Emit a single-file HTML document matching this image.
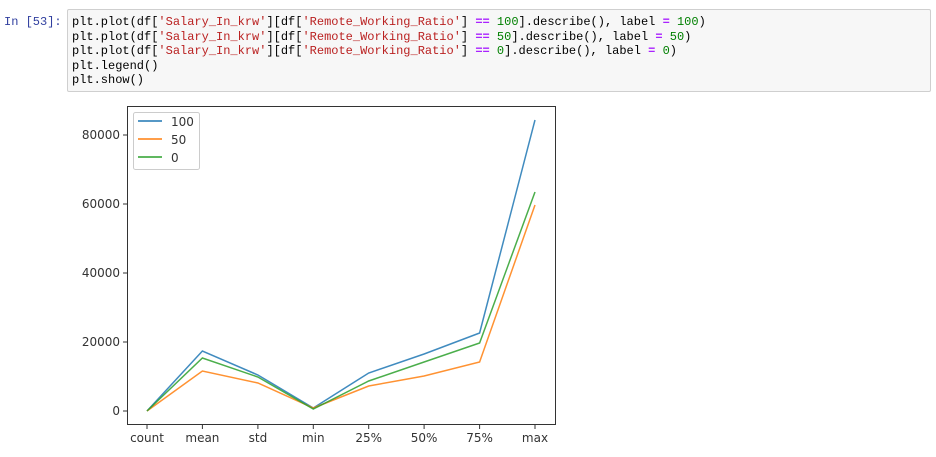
<!DOCTYPE html>
<html><head><style>
body{margin:0;background:#fff;width:936px;height:457px;overflow:hidden;position:relative;font-family:"Liberation Sans",sans-serif}
.prompt{position:absolute;left:4px;top:15px;font:12px/14.5px "Liberation Mono",monospace;color:#303f9f}
.cell{position:absolute;left:67px;top:9px;width:864px;height:83px;background:#f7f7f7;border:1px solid #cfcfcf;border-radius:2px;box-sizing:border-box}
pre{margin:0;position:absolute;left:4px;top:5px;font:12px/14.5px "Liberation Mono",monospace;color:#000}
.s{color:#ba2121}.o{color:#aa22ff;font-weight:bold}.n{color:#008000}
</style></head><body>
<div class="prompt">In [53]:</div>
<div class="cell"><pre>plt.plot(df[<span class="s">'Salary_In_krw'</span>][df[<span class="s">'Remote_Working_Ratio'</span>] <span class="o">==</span> <span class="n">100</span>].describe(), label <span class="o">=</span> <span class="n">100</span>)
plt.plot(df[<span class="s">'Salary_In_krw'</span>][df[<span class="s">'Remote_Working_Ratio'</span>] <span class="o">==</span> <span class="n">50</span>].describe(), label <span class="o">=</span> <span class="n">50</span>)
plt.plot(df[<span class="s">'Salary_In_krw'</span>][df[<span class="s">'Remote_Working_Ratio'</span>] <span class="o">==</span> <span class="n">0</span>].describe(), label <span class="o">=</span> <span class="n">0</span>)
plt.legend()
plt.show()</pre></div>
<svg width="936" height="457" style="position:absolute;left:0;top:0" font-family="DejaVu Sans, sans-serif" font-size="12" fill="#333">
<rect x="127.5" y="106.5" width="428" height="318" fill="none" stroke="#333" stroke-width="1"/>
<g stroke="#333">
<line x1="123" x2="127" y1="411" y2="411"/><line x1="123" x2="127" y1="342" y2="342"/><line x1="123" x2="127" y1="273" y2="273"/><line x1="123" x2="127" y1="204" y2="204"/><line x1="123" x2="127" y1="135" y2="135"/>
<line x1="147" x2="147" y1="425" y2="429"/><line x1="202.4" x2="202.4" y1="425" y2="429"/><line x1="257.9" x2="257.9" y1="425" y2="429"/><line x1="313.3" x2="313.3" y1="425" y2="429"/><line x1="368.7" x2="368.7" y1="425" y2="429"/><line x1="424.1" x2="424.1" y1="425" y2="429"/><line x1="479.6" x2="479.6" y1="425" y2="429"/><line x1="535" x2="535" y1="425" y2="429"/>
</g>
<g text-anchor="end"><text x="120" y="415">0</text><text x="120" y="346">20000</text><text x="120" y="277">40000</text><text x="120" y="208">60000</text><text x="120" y="139">80000</text></g>
<g text-anchor="middle"><text x="147" y="442">count</text><text x="202.4" y="442">mean</text><text x="257.9" y="442">std</text><text x="313.3" y="442">min</text><text x="368.7" y="442">25%</text><text x="424.1" y="442">50%</text><text x="479.6" y="442">75%</text><text x="535" y="442">max</text></g>
<g fill="none" stroke-width="1.5">
<polyline stroke="#1f77b4" opacity=".85" points="147,411 202.4,351 257.9,375 313.3,408 368.7,373 424.1,354 479.6,333 535,120"/>
<polyline stroke="#ff7f0e" opacity=".85" points="147,411 202.4,371 257.9,383 313.3,408 368.7,386 424.1,376 479.6,362 535,205"/>
<polyline stroke="#2ca02c" opacity=".85" points="147,411 202.4,358 257.9,377 313.3,409 368.7,381 424.1,362 479.6,343 535,192"/>
</g>
<rect x="133.5" y="112.5" width="66" height="57" rx="2" fill="#fff" fill-opacity=".8" stroke="#ccc"/>
<line x1="138" x2="162" y1="121" y2="121" stroke="#1f77b4" stroke-width="1.5"/>
<line x1="138" x2="162" y1="139" y2="139" stroke="#ff7f0e" stroke-width="1.5"/>
<line x1="138" x2="162" y1="157" y2="157" stroke="#2ca02c" stroke-width="1.5"/>
<text x="171" y="126">100</text><text x="171" y="144">50</text><text x="171" y="162">0</text>
</svg>
</body></html>
